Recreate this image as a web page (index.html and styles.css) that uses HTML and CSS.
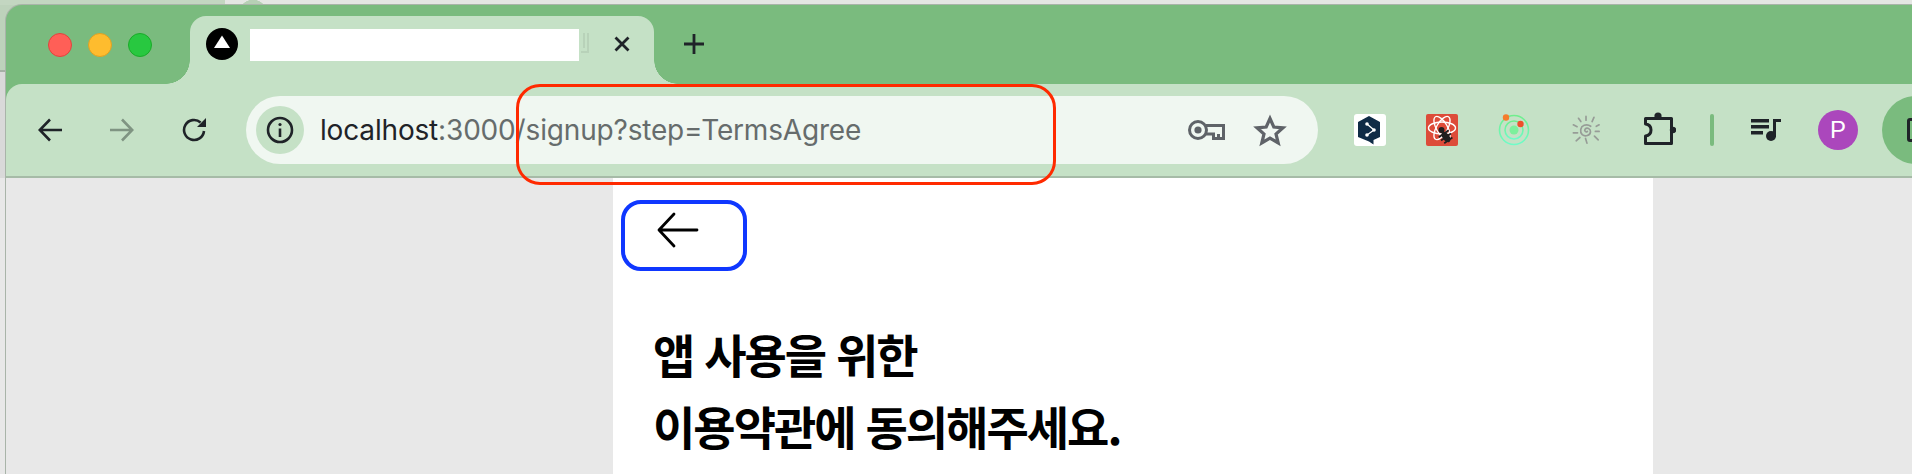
FILE: index.html
```html
<!DOCTYPE html>
<html lang="ko">
<head>
    <meta charset="UTF-8">
    <title>localhost:3000/signup?step=TermsAgree</title>
    <link rel="stylesheet" href="styles.css">
</head>
<body>
    <div class="window">
        <div class="tabstrip">
            <div class="lights">
                <span class="light red"></span>
                <span class="light yellow"></span>
                <span class="light green"></span>
            </div>
            <div class="tab">
                <svg class="favicon" viewBox="0 0 32 32"><circle cx="16" cy="16" r="16" fill="#000"/><path d="M16 7.5 24 20H8Z" fill="#fff"/></svg>
                <div class="tab-title"></div>
                <svg class="tab-ghost" viewBox="0 0 10 22" fill="none" stroke="#b4cdb5" stroke-width="1.5"><path d="M4 1v15M8 1v20M1 20h6"/></svg>
                <svg class="tab-close" viewBox="0 0 16 16" fill="none" stroke="#1f2328" stroke-width="2.8"><path d="M1.5 1.5 14.500 14.500M14.500 1.5 1.5 14.500"/></svg>
            </div>
            <svg class="new-tab" viewBox="0 0 20 20" fill="none" stroke="#1f2328" stroke-width="2.8"><path d="M10 0V20M0 10H20"/></svg>
        </div>

        <div class="toolbar">
            <button class="tool">
                <svg width="24" height="24" viewBox="0 0 24 24" fill="none" stroke="#1f2328" stroke-width="2.6"><path d="M24 12H2M12 1.5 1.8 12 12 22.5"/></svg>
            </button>
            <button class="tool">
                <svg width="24" height="24" viewBox="0 0 24 24" fill="none" stroke="#7f9482" stroke-width="2.6"><path d="M0 12H22M12 1.5 22.2 12 12 22.5"/></svg>
            </button>
            <button class="tool">
                <svg width="24" height="24" viewBox="0 0 24 24" fill="none" stroke="#1f2328" stroke-width="2.6"><path d="M22 13a10 10 0 1 1-3.4-8.6"/><path d="M24 0v9h-9z" fill="#1f2328" stroke="none"/></svg>
            </button>

            <div class="omnibox">
                <span class="site-info">
                    <svg width="28" height="28" viewBox="0 0 28 28" fill="none" stroke="#1f2328" stroke-width="2.6"><circle cx="14" cy="14" r="12"/><path d="M14 12.5V21"/><circle cx="14" cy="8.5" r="1.6" fill="#1f2328" stroke="none"/></svg>
                </span>
                <div class="url"><span class="host">localhost</span>:3000/signup?step=TermsAgree</div>
                <svg class="key" width="37" height="20" viewBox="0 0 37 20" fill="none" stroke="#5f6368" stroke-width="3"><circle cx="10" cy="10" r="8.5"/><circle cx="10" cy="10" r="3.6" fill="#5f6368" stroke="none"/><path d="M18 5.5H35.5V18.5H25.5V14H18M30.5 14V18"/></svg>
                <svg class="star" width="34" height="33" viewBox="0 0 34 33" fill="none" stroke="#5f6368" stroke-width="3.2"><path d="M17 4.5 20.8 13 30 13.8 23 20 25.2 29 17 24.2 8.8 29 11 20 4 13.8 13.2 13Z"/></svg>
            </div>

            <div class="extensions">
                <button class="tool">
                    <svg width="32" height="32" viewBox="0 0 32 32"><rect width="32" height="32" rx="3" fill="#fff"/><path d="M15 2 26 8V23L19.5 26V30.5L15 27.5 4 23V8Z" fill="#0f2b46"/><path d="M13 10 20 16 13 21" fill="none" stroke="#fff" stroke-width="1.3"/><circle cx="13" cy="10" r="1.8" fill="#fff"/><circle cx="20" cy="16" r="1.8" fill="#fff"/><circle cx="13" cy="21" r="1.8" fill="#fff"/></svg>
                </button>
                <button class="tool">
                    <svg width="32" height="32" viewBox="0 0 32 32"><rect width="32" height="32" rx="2" fill="#dd4b39"/><g fill="none" stroke="#fff" stroke-width="1.4"><ellipse cx="16" cy="14" rx="13.5" ry="6"/><ellipse cx="16" cy="14" rx="13" ry="5.5" transform="rotate(60 16 14)"/><ellipse cx="16" cy="14" rx="13" ry="5.5" transform="rotate(-60 16 14)"/></g><circle cx="15.5" cy="16" r="3" fill="#1f1f1f"/><g transform="rotate(-35 20 23)"><ellipse cx="20" cy="23" rx="3.4" ry="6" fill="#1f1f1f"/><path d="M14 19H26M14 23H26M15 27H25" stroke="#1f1f1f" stroke-width="1.8"/></g></svg>
                </button>
                <button class="tool">
                    <svg width="32" height="32" viewBox="0 0 32 32"><defs><linearGradient id="orbit" x1="0" y1="0" x2="0" y2="1"><stop offset="0" stop-color="#6fee8c"/><stop offset="1" stop-color="#6ffcc8"/></linearGradient></defs><g fill="none" stroke="url(#orbit)" stroke-width="1.6"><circle cx="16" cy="16" r="14.5"/><circle cx="16" cy="16" r="9"/></g><circle cx="16" cy="16" r="4.5" fill="#7df09c"/><circle cx="8" cy="3.5" r="3.2" fill="#f57c2c"/><circle cx="22.5" cy="10" r="3.2" fill="#ee4f2c"/></svg>
                </button>
                <button class="tool">
                    <svg width="30" height="30" viewBox="0 0 32 32" fill="none" stroke="#979c97" stroke-width="1.8" stroke-linecap="round"><path d="M17.5 17.5C16 19 13.8 17 15 15.2 17 12.8 21 14.5 20.8 18 20.5 22 15 23.5 12 21 9 18 10 12.5 14 11 17 10 19 10.5 21 12"/><path d="M16 1.5V5.5M8 3.5 10.5 7M24.5 2.5 22.5 7M2.5 10.5 6.5 12.5M27 12 30 10.5M2.5 19H7M26 17.5H30M5.5 27.5 9.5 24M25 22.5 29 26.5M15.5 25 17 30"/></svg>
                </button>
                <button class="tool">
                    <svg width="36" height="36" viewBox="0 0 36 36" fill="none" stroke="#1f2328" stroke-width="3" stroke-linejoin="round"><path d="M5.5 6.5H31.5V31.5H5.5V24C9.5 23.5 11 21 11 18S9.5 12.5 5.5 12Z"/><circle cx="18" cy="4" r="3.6" fill="#1f2328" stroke="none"/><circle cx="33" cy="18" r="3.2" fill="#1f2328" stroke="none"/></svg>
                </button>
            </div>
            <div class="separator"></div>
            <button class="tool">
                <svg width="32" height="24" viewBox="0 0 32 24" fill="#1f2328"><path d="M1 1H19V4.5H1ZM1 7H19V10.5H1ZM1 13H13V16.5H1ZM23 1H31V4H26V19H23Z"/><circle cx="21" cy="18" r="5"/></svg>
            </button>
            <button class="tool">
                <span class="avatar">P</span>
            </button>
            <div class="side-panel">
                <span class="side-icon"></span>
            </div>
        </div>

        <div class="viewport">
            <div class="sheet">
                <a class="back-link">
                    <svg width="42" height="36" viewBox="0 0 42 36" fill="none" stroke="#000" stroke-width="2.8" stroke-linecap="round" stroke-linejoin="round"><path d="M40 18H2M17 2 2 18 17 34"/></svg>
                </a>
                <h1 class="title">앱 사용을 위한<br>이용약관에 동의해주세요.</h1>
            </div>
        </div>
    </div>

    <div class="highlight"></div>
</body>
</html>
```

FILE: styles.css
```css
html, body {
    height: 100%;
    margin: 0;
    overflow: hidden;
}
body {
    background:
        radial-gradient(circle at 253px 14px, #b7d0b5 14px, transparent 14.5px),
        linear-gradient(90deg, #c3d6c1 225px, #e4e6e3 225px) 0 0 / 100% 5px no-repeat,
        linear-gradient(#bdd2bb 70px, #a5b0a5 70px, #a5b0a5 72px, #d9d9d9 72px, #d9d9d9 178px, #e8e8e8 178px);
    padding: 5px 0 0 6px;
    box-sizing: border-box;
    font-family: 'Inter', 'Noto Sans CJK KR', sans-serif;
}
.window {
    background-color: #7abb7e;
    border-top-left-radius: 16px;
    box-shadow: 0 0 0 1px #a9b4a9;
    display: flex;
    flex-direction: column;
    height: 469px;
}

/* tab strip */
.tabstrip {
    display: flex;
    align-items: flex-start;
    height: 79px;
    flex-shrink: 0;
}
.lights {
    display: flex;
    gap: 16px;
    margin: 28px 0 0 42px;
}
.light {
    width: 24px;
    height: 24px;
    border-radius: 50%;
    box-sizing: border-box;
    border: 1px solid;
}
.light.red { background-color: #ff5f57; border-color: #e0443e; }
.light.yellow { background-color: #febc2e; border-color: #dea123; }
.light.green { background-color: #28c840; border-color: #1aab29; }
.tab {
    position: relative;
    display: flex;
    align-items: flex-start;
    box-sizing: border-box;
    width: 464px;
    height: 68px;
    margin: 11px 0 0 38px;
    padding: 12px 0 0 16px;
    background-color: #c5e1c6;
    border-radius: 16px 16px 0 0;
}
.tab::before, .tab::after {
    content: "";
    position: absolute;
    bottom: 0;
    width: 24px;
    height: 24px;
}
.tab::before {
    left: -24px;
    background: radial-gradient(circle at 0 0, transparent 23.5px, #c5e1c6 24px);
}
.tab::after {
    right: -24px;
    background: radial-gradient(circle at 100% 0, transparent 23.5px, #c5e1c6 24px);
}
.favicon {
    width: 32px;
    height: 32px;
}
.tab-title {
    width: 329px;
    height: 32px;
    margin: 1px 0 0 12px;
    background-color: #fff;
}
.tab-ghost {
    width: 10px;
    height: 22px;
    margin: 4px 0 0 1px;
}
.tab-close {
    width: 16px;
    height: 16px;
    margin: 8px 0 0 24px;
}
.new-tab {
    width: 20px;
    height: 20px;
    margin: 29px 0 0 30px;
}

/* toolbar */
.toolbar {
    display: flex;
    align-items: center;
    height: 94px;
    flex-shrink: 0;
    box-sizing: border-box;
    padding-left: 8px;
    background-color: #c5e1c6;
    border-bottom: 2px solid #a6bba7;
    border-top-left-radius: 16px;
    overflow: hidden;
}
.tool {
    display: flex;
    align-items: center;
    justify-content: center;
    width: 72px;
    height: 68px;
    padding: 0;
    border: none;
    background: none;
    flex-shrink: 0;
}
.omnibox {
    display: flex;
    align-items: center;
    box-sizing: border-box;
    width: 1072px;
    height: 68px;
    margin-left: 16px;
    padding: 0 31px 0 10px;
    border-radius: 34px;
    background-color: #f0f7f1;
    flex-shrink: 0;
}
.site-info {
    display: flex;
    align-items: center;
    justify-content: center;
    width: 48px;
    height: 48px;
    border-radius: 50%;
    background-color: #c5e1c6;
    flex-shrink: 0;
}
.url {
    flex: 1;
    margin-left: 16px;
    font-size: 28px;
    letter-spacing: -0.17px;
    color: #666c6c;
    white-space: nowrap;
}
.url .host {
    color: #1f2328;
}
.key {
    margin-right: 28px;
}
.extensions {
    display: flex;
    margin-left: 16px;
}
.separator {
    width: 4px;
    height: 32px;
    margin: 0 16px;
    border-radius: 2px;
    background-color: #7abb7e;
    flex-shrink: 0;
}
.avatar {
    width: 40px;
    height: 40px;
    border-radius: 50%;
    background-color: #ab47bc;
    color: #fff;
    font-size: 24px;
    font-weight: 300;
    line-height: 40px;
    text-align: center;
}
.side-panel {
    display: flex;
    align-items: center;
    flex-shrink: 0;
    width: 80px;
    height: 68px;
    margin-left: 8px;
    padding-left: 25px;
    box-sizing: border-box;
    border-radius: 34px 0 0 34px;
    background-color: #7abb7e;
}
.side-icon {
    width: 30px;
    height: 18px;
    border: 3px solid #1f2328;
    border-radius: 3px;
    flex-shrink: 0;
}

/* page */
.viewport {
    flex: 1;
    background-color: #e8e8e8;
}
.sheet {
    box-sizing: border-box;
    width: 1040px;
    height: 100%;
    margin-left: 607px;
    padding-top: 22px;
    background-color: #fff;
}
.back-link {
    display: flex;
    align-items: center;
    justify-content: flex-start;
    box-sizing: border-box;
    width: 126px;
    height: 71px;
    margin-left: 8px;
    padding: 0 0 11px 32px;
    border: 4px solid #0f37ff;
    border-radius: 20px;
}
.title {
    margin: 46px 0 0 40px;
    font-family: 'Noto Sans CJK KR', sans-serif;
    font-size: 46px;
    font-weight: 700;
    line-height: 72px;
    letter-spacing: -2px;
    color: #000;
}

/* red annotation drawn over the address bar */
.highlight {
    position: absolute;
    left: 516px;
    top: 84px;
    width: 540px;
    height: 101px;
    box-sizing: border-box;
    border: 3px solid #ff2a00;
    border-radius: 24px;
}
```
